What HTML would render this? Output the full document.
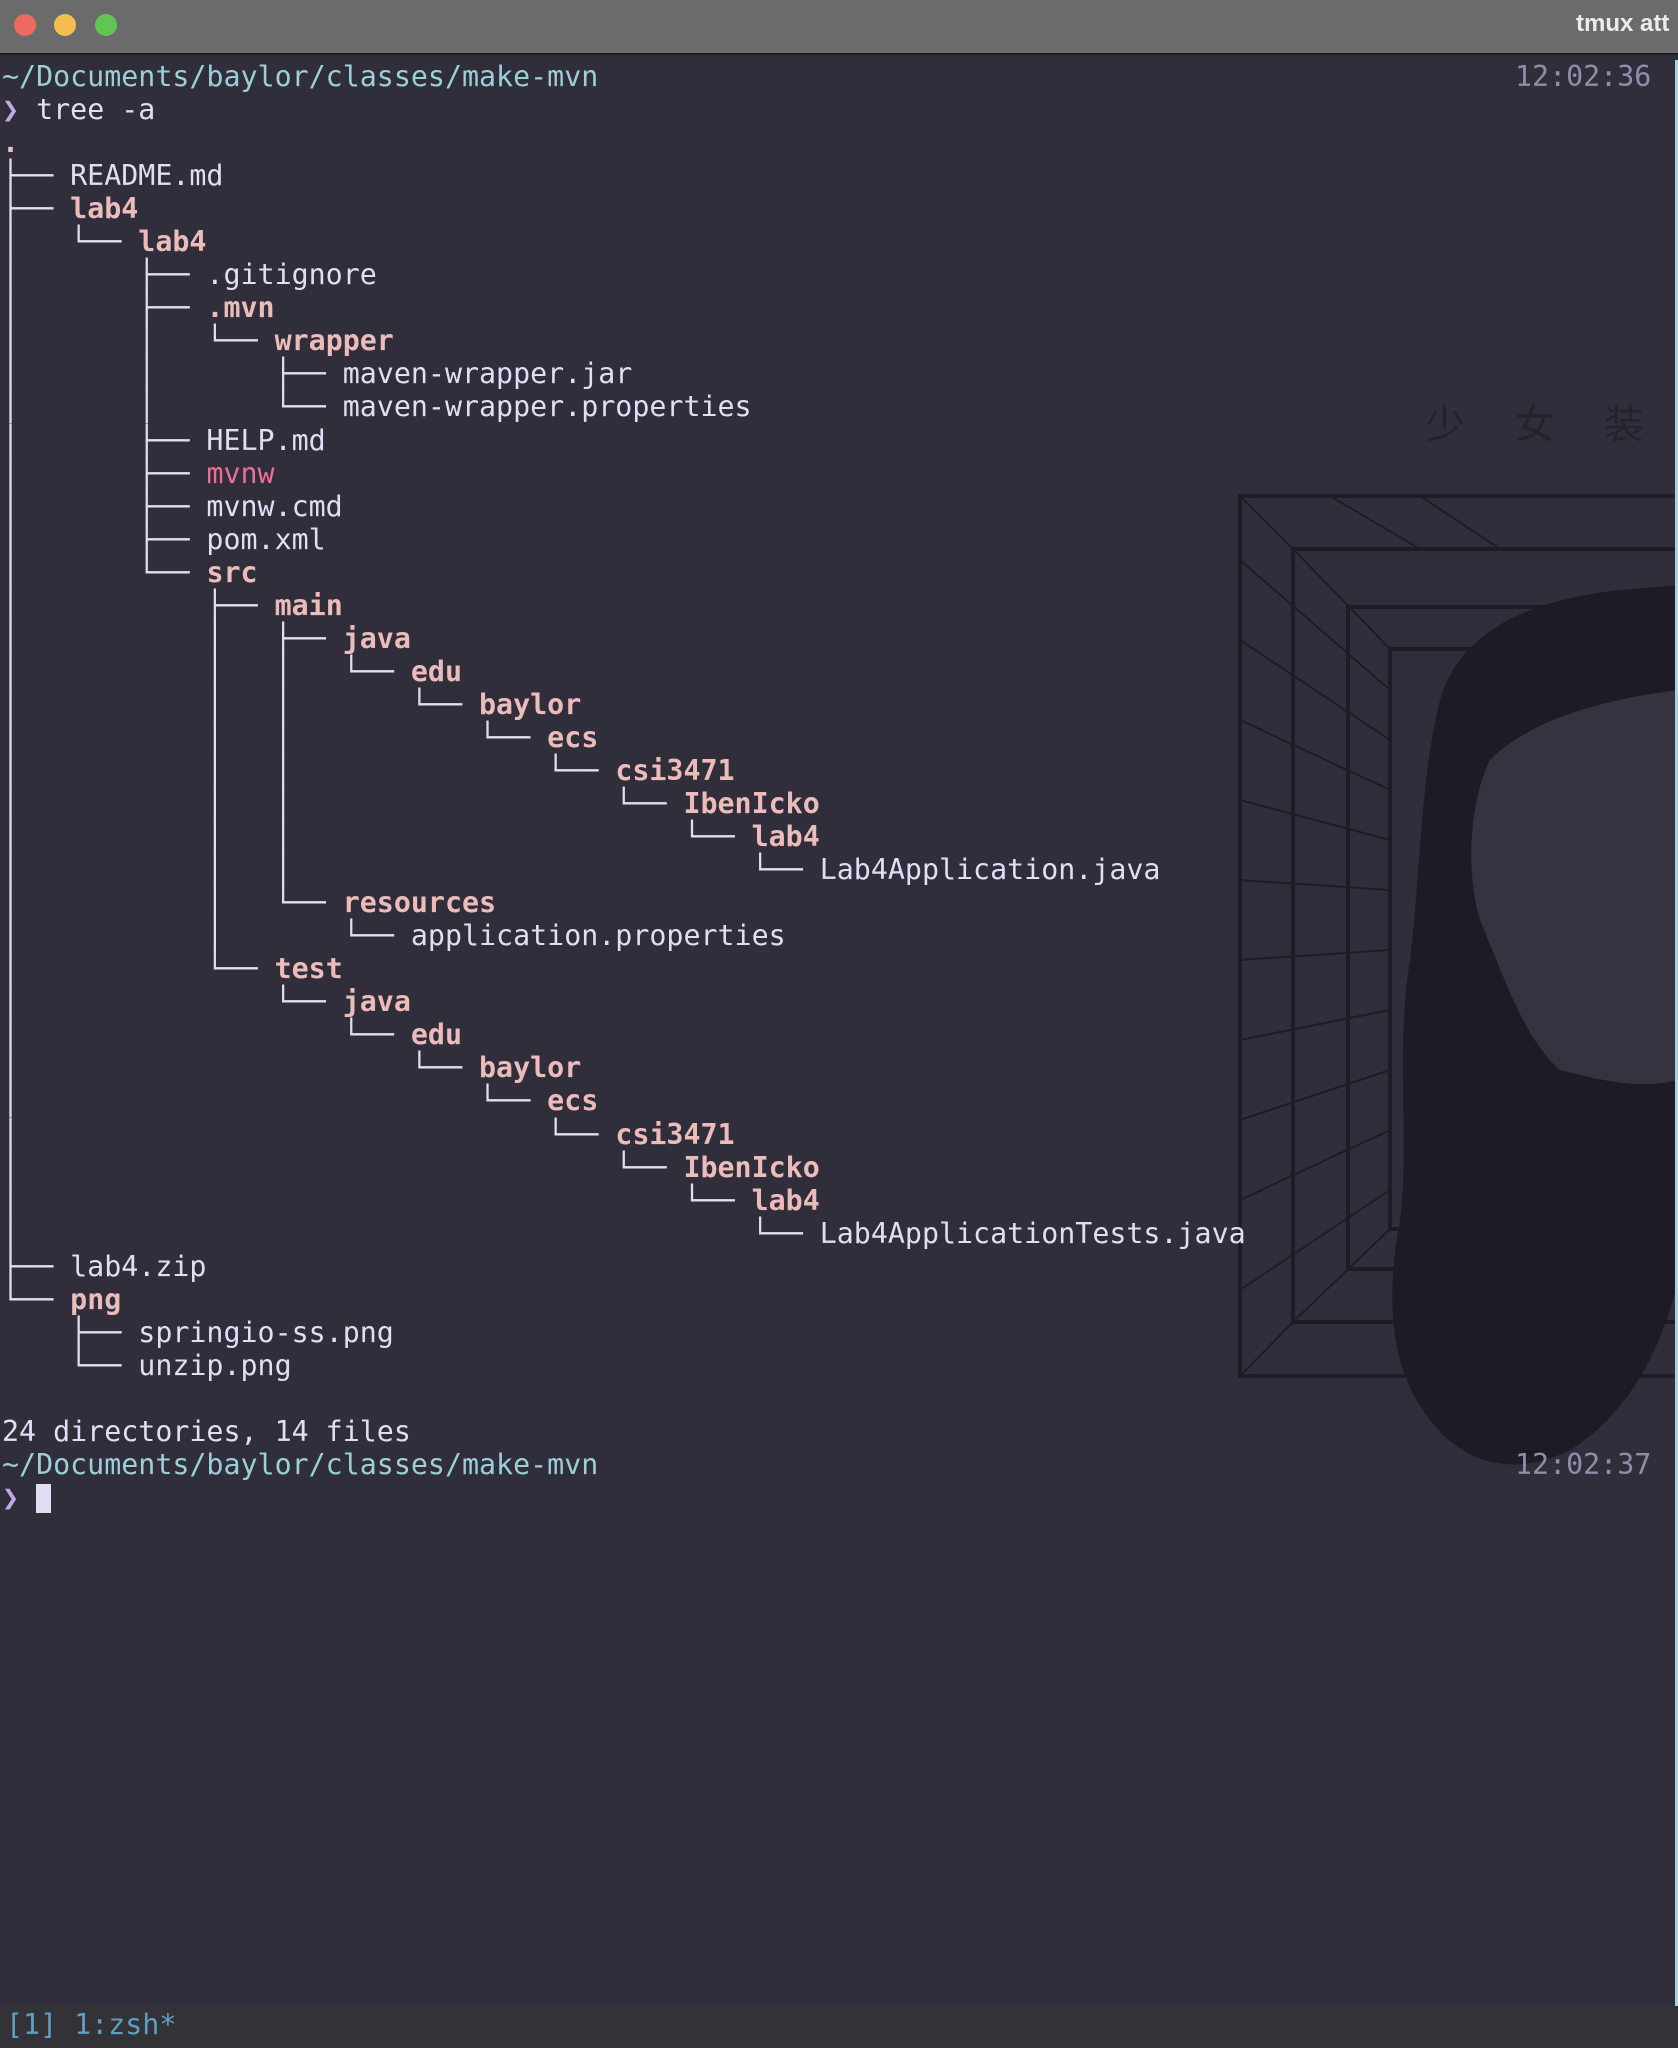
<!DOCTYPE html>
<html><head><meta charset="utf-8">
<style>
html,body{margin:0;padding:0;width:1678px;height:2048px;overflow:hidden;background:#302e3a;}
#title{position:absolute;left:0;top:0;width:1678px;height:53px;background:#6b6b6b;border-bottom:2px solid #1e1e1e;}
.dot{position:absolute;top:14px;width:22px;height:22px;border-radius:50%;}
#ttext{position:absolute;left:1576px;top:10px;font:bold 24px "Liberation Sans",sans-serif;color:#ececec;white-space:nowrap;}
#art{position:absolute;left:0;top:0;}
pre{position:absolute;left:2px;top:60px;margin:0;font-family:"DejaVu Sans Mono",monospace;font-size:28.3px;line-height:33.05px;color:#e0def4;white-space:pre;}
.d{color:#ebbcba;font-weight:bold}
.p{color:#9ccfd8}
.g{color:#c4a7e7}
.l{color:#eb6f92}
.t{position:absolute;font-family:"DejaVu Sans Mono",monospace;font-size:28.3px;line-height:33px;color:#908caa;}
#cur{display:inline-block;width:15px;height:29px;background:#e0def4;vertical-align:-6px;}
#status{position:absolute;left:0;top:2006px;width:1678px;height:42px;background:#333236;}
#status span{position:absolute;left:6px;top:2px;font-family:"DejaVu Sans Mono",monospace;font-size:28.3px;line-height:33px;color:#5f9fc4;white-space:pre;}
#vline{position:absolute;left:1675px;top:60px;width:3px;height:1946px;background:#a9d3dc;}
.kj{position:absolute;top:392px;font:40px "Noto Sans CJK SC",sans-serif;color:#24222c;}
</style></head><body>
<svg id="art" width="1678" height="2048" viewBox="0 0 1678 2048">
 <g stroke="#1e1c26" stroke-width="4" fill="none">
  <rect x="1240" y="496" width="460" height="880"/>
  <rect x="1293" y="549" width="420" height="773"/>
  <rect x="1348" y="607" width="380" height="662"/>
  <rect x="1390" y="649" width="340" height="580"/>
 </g>
 <g stroke="#1e1c26" stroke-width="2" fill="none">
  <line x1="1240" y1="496" x2="1293" y2="549"/><line x1="1240" y1="1376" x2="1293" y2="1322"/>
  <line x1="1293" y1="549" x2="1390" y2="649"/><line x1="1293" y1="1322" x2="1390" y2="1229"/>
  <line x1="1240" y1="560" x2="1390" y2="690"/><line x1="1240" y1="640" x2="1390" y2="740"/>
  <line x1="1240" y1="720" x2="1390" y2="790"/><line x1="1240" y1="800" x2="1390" y2="840"/>
  <line x1="1240" y1="880" x2="1390" y2="890"/><line x1="1240" y1="960" x2="1390" y2="950"/>
  <line x1="1240" y1="1040" x2="1390" y2="1010"/><line x1="1240" y1="1120" x2="1390" y2="1070"/>
  <line x1="1240" y1="1200" x2="1390" y2="1130"/><line x1="1240" y1="1290" x2="1390" y2="1190"/>
  <line x1="1330" y1="496" x2="1420" y2="549"/><line x1="1420" y1="496" x2="1500" y2="549"/>
 </g>
 <path d="M1440 700 C1460 630 1530 600 1620 590 L1678 585 L1678 1280 C1660 1360 1620 1420 1570 1450 C1510 1480 1460 1460 1430 1420 C1390 1370 1385 1300 1400 1220 C1410 1140 1395 1050 1410 960 C1420 880 1420 780 1440 700 Z" fill="#1d1b25"/>
 <path d="M1490 760 C1530 720 1600 700 1678 690 L1678 1080 C1640 1090 1600 1080 1560 1070 C1525 1040 1505 980 1480 920 C1465 870 1470 800 1490 760 Z" fill="#35333f"/>
</svg>
<div id="title">
 <div class="dot" style="left:14px;background:#ee6a5e"></div>
 <div class="dot" style="left:54px;background:#f5bf4f"></div>
 <div class="dot" style="left:95px;background:#61c554"></div>
 <div id="ttext">tmux att</div>
</div>
<div class="kj" style="left:1425px">少</div>
<div class="kj" style="left:1515px">女</div>
<div class="kj" style="left:1604px">装</div>
<div id="vline"></div>
<pre><span class="p">~/Documents/baylor/classes/make-mvn</span>
<span class="g">❯</span> tree -a
<span class="d">.</span>
├── README.md
├── <span class="d">lab4</span>
│   └── <span class="d">lab4</span>
│       ├── .gitignore
│       ├── <span class="d">.mvn</span>
│       │   └── <span class="d">wrapper</span>
│       │       ├── maven-wrapper.jar
│       │       └── maven-wrapper.properties
│       ├── HELP.md
│       ├── <span class="l">mvnw</span>
│       ├── mvnw.cmd
│       ├── pom.xml
│       └── <span class="d">src</span>
│           ├── <span class="d">main</span>
│           │   ├── <span class="d">java</span>
│           │   │   └── <span class="d">edu</span>
│           │   │       └── <span class="d">baylor</span>
│           │   │           └── <span class="d">ecs</span>
│           │   │               └── <span class="d">csi3471</span>
│           │   │                   └── <span class="d">IbenIcko</span>
│           │   │                       └── <span class="d">lab4</span>
│           │   │                           └── Lab4Application.java
│           │   └── <span class="d">resources</span>
│           │       └── application.properties
│           └── <span class="d">test</span>
│               └── <span class="d">java</span>
│                   └── <span class="d">edu</span>
│                       └── <span class="d">baylor</span>
│                           └── <span class="d">ecs</span>
│                               └── <span class="d">csi3471</span>
│                                   └── <span class="d">IbenIcko</span>
│                                       └── <span class="d">lab4</span>
│                                           └── Lab4ApplicationTests.java
├── lab4.zip
└── <span class="d">png</span>
    ├── springio-ss.png
    └── unzip.png

24 directories, 14 files
<span class="p">~/Documents/baylor/classes/make-mvn</span>
<span class="g">❯</span> <span id="cur"></span></pre>
<div class="t" style="left:1515px;top:60px">12:02:36</div>
<div class="t" style="left:1515px;top:1448px">12:02:37</div>
<div id="status"><span>[1] 1:zsh*</span></div>
</body></html>
